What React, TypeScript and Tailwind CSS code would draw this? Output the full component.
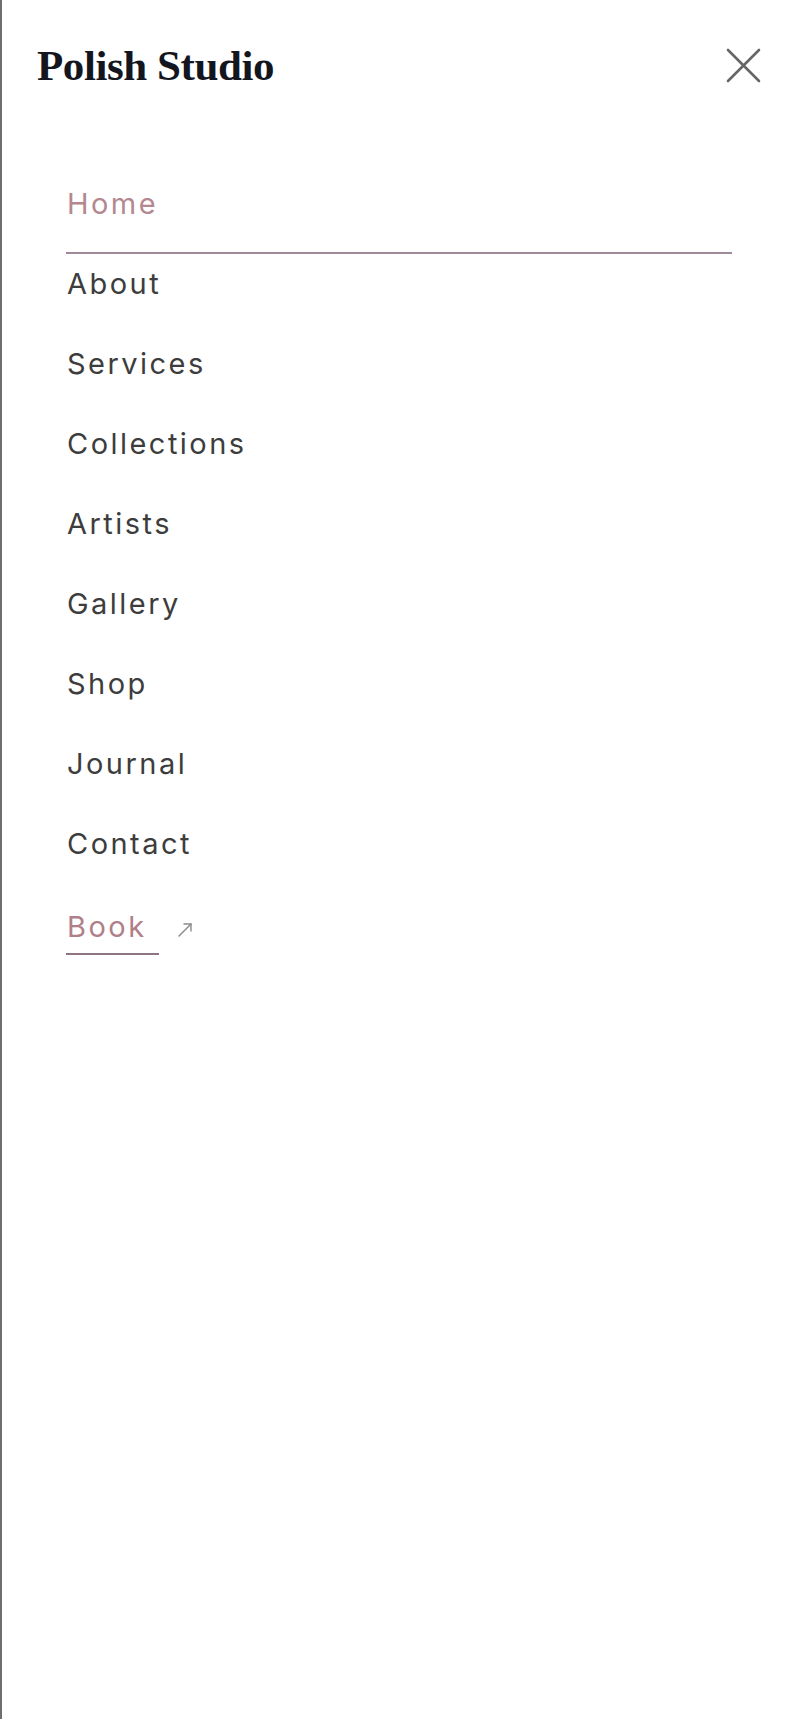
import React from "react";

const items = ["About", "Services", "Collections", "Artists", "Gallery", "Shop", "Journal", "Contact"];

export default function App() {
  return (
    <div className="min-h-[1719px] w-full border-l-2 border-[#6f6f6f] bg-white">
      <header className="flex h-[90px] items-start justify-between pl-[35px] pr-[33px] pt-[42px]">
        <h1
          className="text-[43px] font-bold leading-[48px] tracking-[-0.01em] text-[#14161f]"
          style={{ fontFamily: '"Liberation Serif", serif' }}
        >
          Polish Studio
        </h1>
        <button className="mt-[6px] flex h-[34px] w-[35px] items-center justify-center text-[#666666]" aria-label="Close">
          <svg width="35" height="35" viewBox="0 0 35 35" fill="none" stroke="currentColor" strokeWidth="2.6" strokeLinecap="round">
            <line x1="2" y1="2" x2="33" y2="33" />
            <line x1="33" y1="2" x2="2" y2="33" />
          </svg>
        </button>
      </header>

      <nav
        className="mt-[74px] flex flex-col pl-[64px] pr-[62px] text-[29px] leading-10 tracking-[0.085em] text-[#3d3d3d]"
        style={{ fontFamily: 'Inter, "Noto Sans", sans-serif' }}
      >
        <a className="block border-b-2 border-[#a08a99] pt-5 pb-[28px] pl-[1px] text-[#b5878f]">Home</a>
        {items.map((label, i) => (
          <a key={label} className={`block pl-[1px] ${i === 0 ? "pt-[10px] pb-5" : "py-5"}`}>
            {label}
          </a>
        ))}
        <div className="flex items-end pt-[23px]">
          <a className="block border-b-2 border-[#8f7482] pb-[6px] pl-[1px] pr-[12px] text-[#b07f8a]">Book</a>
          <svg className="mb-[17px] ml-[18px] text-[#8a8a8a]" width="16" height="16" viewBox="0 0 16 16" fill="none" stroke="currentColor" strokeWidth="1.4" strokeLinecap="round" strokeLinejoin="round">
            <line x1="2" y1="14" x2="14" y2="2" />
            <polyline points="7,2 14,2 14,9" />
          </svg>
        </div>
      </nav>
    </div>
  );
}
